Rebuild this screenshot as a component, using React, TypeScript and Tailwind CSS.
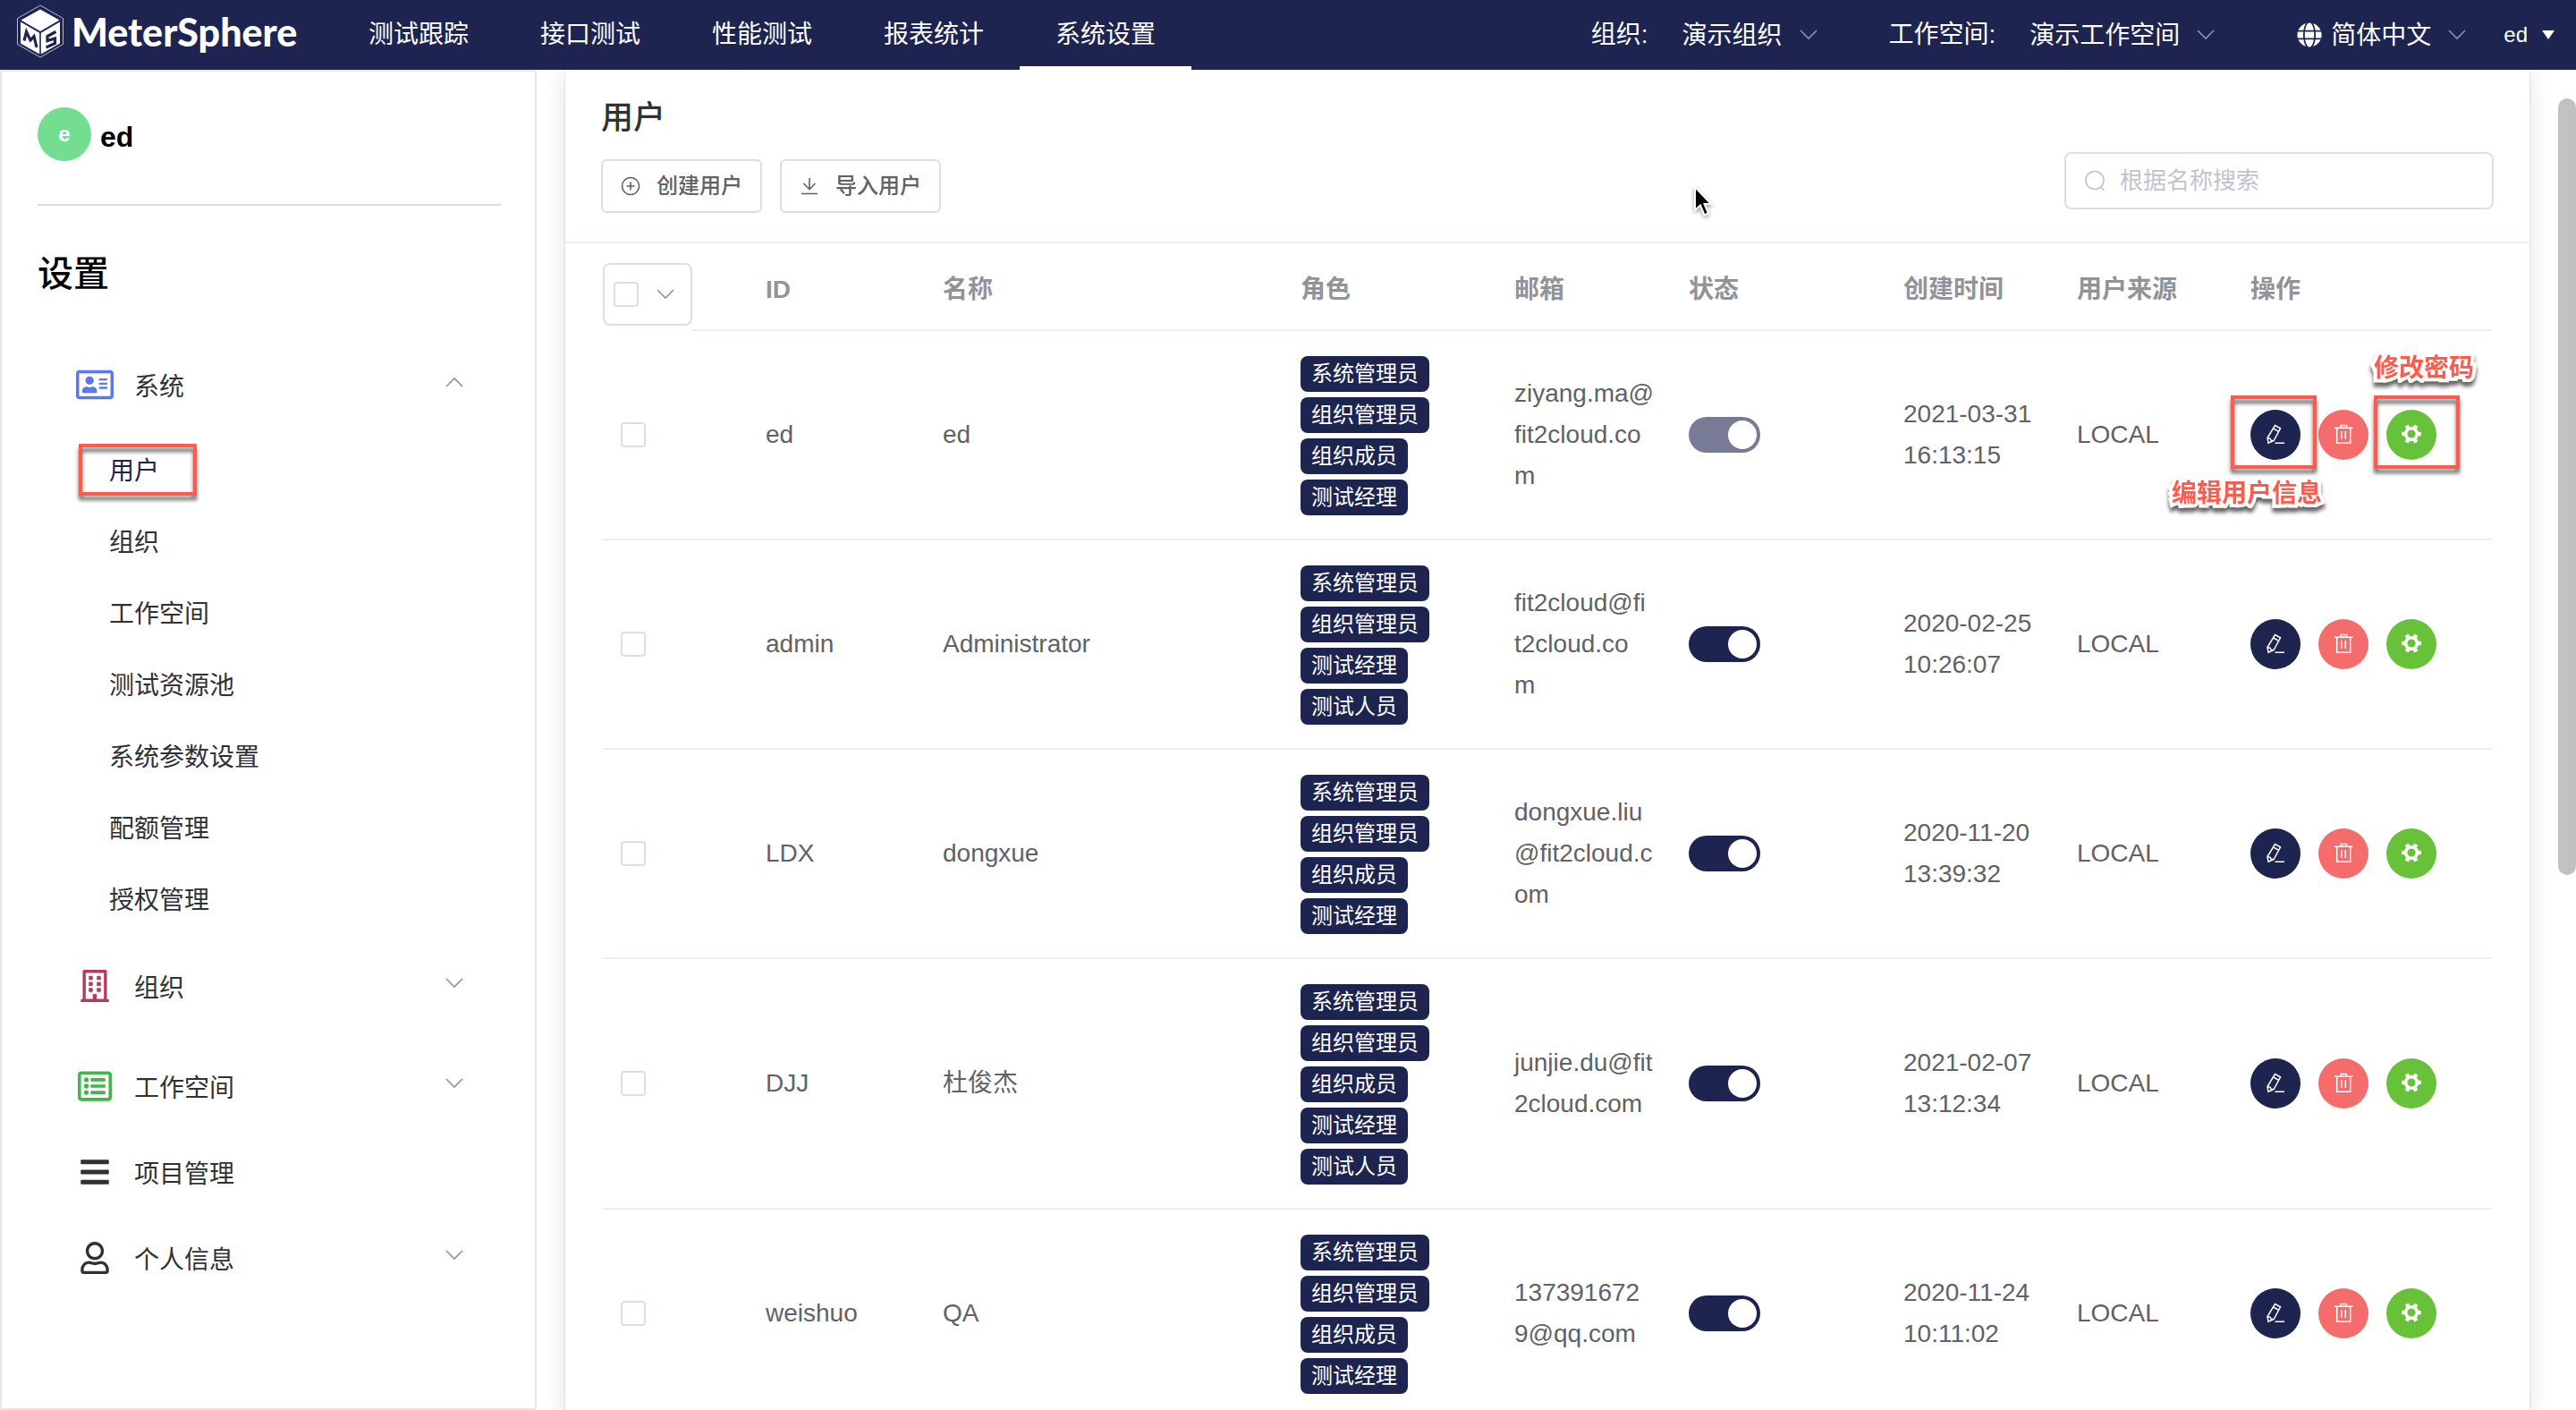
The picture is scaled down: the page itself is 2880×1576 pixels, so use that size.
import React from "react";
import {
  FaBars,
  FaGlobe,
  FaRegAddressCard,
  FaRegBuilding,
  FaRegListAlt,
  FaRegUser,
} from "react-icons/fa";

const NAV = ["测试跟踪", "接口测试", "性能测试", "报表统计", "系统设置"];

const SYSTEM_ITEMS = [
  "用户",
  "组织",
  "工作空间",
  "测试资源池",
  "系统参数设置",
  "配额管理",
  "授权管理",
];

type User = {
  id: string;
  name: string;
  roles: string[];
  email: string[];
  created: string[];
  locked?: boolean;
};

const USERS: User[] = [
  {
    id: "ed",
    name: "ed",
    roles: ["系统管理员", "组织管理员", "组织成员", "测试经理"],
    email: ["ziyang.ma@", "fit2cloud.co", "m"],
    created: ["2021-03-31", "16:13:15"],
    locked: true,
  },
  {
    id: "admin",
    name: "Administrator",
    roles: ["系统管理员", "组织管理员", "测试经理", "测试人员"],
    email: ["fit2cloud@fi", "t2cloud.co", "m"],
    created: ["2020-02-25", "10:26:07"],
  },
  {
    id: "LDX",
    name: "dongxue",
    roles: ["系统管理员", "组织管理员", "组织成员", "测试经理"],
    email: ["dongxue.liu", "@fit2cloud.c", "om"],
    created: ["2020-11-20", "13:39:32"],
  },
  {
    id: "DJJ",
    name: "杜俊杰",
    roles: ["系统管理员", "组织管理员", "组织成员", "测试经理", "测试人员"],
    email: ["junjie.du@fit", "2cloud.com"],
    created: ["2021-02-07", "13:12:34"],
  },
  {
    id: "weishuo",
    name: "QA",
    roles: ["系统管理员", "组织管理员", "组织成员", "测试经理"],
    email: ["137391672", "9@qq.com"],
    created: ["2020-11-24", "10:11:02"],
  },
];

function Chevron({ up = false, className = "" }: { up?: boolean; className?: string }) {
  return (
    <svg
      viewBox="0 0 20 12"
      fill="none"
      stroke="currentColor"
      strokeWidth="1.6"
      className={`h-3 w-5 shrink-0 ${className}`}
      aria-hidden="true"
    >
      <path d={up ? "M1 11 10 2l9 9" : "M1 1l9 9 9-9"} />
    </svg>
  );
}

function Logo() {
  return (
    <a href="#home" className="flex items-center gap-2 text-white">
      <svg viewBox="0 0 54 62" className="h-[62px] w-[54px]" aria-hidden="true">
        <path d="M27 2 52.500 16.500v29L27 60 1.500 45.500v-29z" fill="none" stroke="#b9bccb" strokeWidth="1" />
        <path d="M27 6.500 48.500 18.500 27 31 5.500 18.500z" fill="#fff" />
        <path d="M5 20.500 26.200 32.800V56.500L5 44.500z" fill="#fff" />
        <path d="M49 20.500 27.800 32.800V56.500L49 44.500z" fill="#fff" />
        <path d="M9 41.500 11.500 31.500l4.500 9.500 4-4.500 3 12.500" fill="none" stroke="#1d244f" strokeWidth="3.200" />
        <path d="M44.500 31.500 35 36.500v5l8.500-2.500v5.500L33.500 49" fill="none" stroke="#1d244f" strokeWidth="3.200" />
      </svg>
      <span className="font-['Lato'] text-[43px] leading-none font-black">MeterSphere</span>
    </a>
  );
}

function HeaderSelect({ id, label, value }: { id: string; label: string; value: string }) {
  return (
    <div className="flex items-center">
      <label htmlFor={id} className="mr-[38px]">
        {label}:
      </label>
      <select id={id} className="appearance-none bg-transparent pt-0.5 text-[28px] outline-none">
        <option>{value}</option>
      </select>
      <Chevron className="ml-[18px] text-[#8f93a8]" />
    </div>
  );
}

function TopBar() {
  return (
    <header className="flex h-[78px] shrink-0 items-center bg-[#1d244f] pr-6 pl-[18px] text-[28px] text-white">
      <div className="w-[354px] shrink-0 pb-2">
        <Logo />
      </div>
      <nav className="flex h-full">
        {NAV.map((item, i) => (
          <a
            key={item}
            href="#nav"
            className={`flex w-48 items-center justify-center border-y-4 border-t-transparent ${
              i === NAV.length - 1 ? "border-b-white" : "border-b-transparent"
            }`}
          >
            {item}
          </a>
        ))}
      </nav>
      <div className="ml-auto flex items-center">
        <HeaderSelect id="org" label="组织" value="演示组织" />
        <div className="ml-20">
          <HeaderSelect id="workspace" label="工作空间" value="演示工作空间" />
        </div>
        <label htmlFor="lang" className="mr-2.5 ml-[92px]">
          <FaGlobe className="h-7 w-7" aria-label="语言" />
        </label>
        <select id="lang" className="appearance-none bg-transparent pt-0.5 text-[28px] outline-none">
          <option>简体中文</option>
        </select>
        <Chevron className="ml-[18px] text-[#8f93a8]" />
        <button type="button" className="ml-[42px] flex items-center gap-4 text-2xl">
          ed
          <svg viewBox="0 0 14 10" className="h-2.5 w-3.5" aria-hidden="true">
            <path d="M0 0h14L7 10z" fill="currentColor" />
          </svg>
        </button>
      </div>
    </header>
  );
}

function MenuTitle({
  icon,
  text,
  arrow,
  short = false,
}: {
  icon: React.ReactNode;
  text: string;
  arrow?: "up" | "down";
  short?: boolean;
}) {
  return (
    <button type="button" className={`flex w-full items-center pl-20 pr-20 ${short ? "h-20" : "h-28"}`}>
      <span className="flex w-12 justify-center">{icon}</span>
      <span className="ml-5 pt-1.5">{text}</span>
      {arrow && <Chevron up={arrow === "up"} className="mb-1.5 ml-auto text-[#909399]" />}
    </button>
  );
}

function Sidebar() {
  return (
    <aside className="flex w-[600px] shrink-0 flex-col rounded-sm border-2 border-[#e6e6e6] bg-white text-[28px] text-[#303133]">
      <div className="mr-[38px] ml-10 flex items-center gap-2.5 border-b-2 border-[#d8dce5] pt-10 pb-12">
        <span className="flex h-[60px] w-[60px] items-center justify-center rounded-full bg-[#73dd92] text-2xl font-bold text-white">
          e
        </span>
        <span className="pt-1.5 text-[32px] leading-10 font-bold text-black">ed</span>
      </div>
      <h2 className="mx-10 mt-[52px] text-[40px] leading-[48px] font-medium text-black">设置</h2>
      <nav className="mt-11">
        <MenuTitle icon={<FaRegAddressCard className="h-[38px] w-[42px] text-[#5b78f0]" />} text="系统" arrow="up" />
        <ul>
          {SYSTEM_ITEMS.map((item, i) => (
            <li key={item} className="relative flex h-20 items-center pt-0.5 pl-[120px]">
              <a href="#menu" className={i === 0 ? "text-[#1d244f]" : ""}>
                {item}
              </a>
              {i === 0 && (
                <span className="absolute top-2.5 left-[86px] h-[58px] w-[132px] border-4 border-[#ff5a4c] drop-shadow-[0_5px_2px_rgba(0,0,0,0.6)]" />
              )}
            </li>
          ))}
        </ul>
        <MenuTitle icon={<FaRegBuilding className="h-9 w-9 text-[#b83a5b]" />} text="组织" arrow="down" />
        <MenuTitle icon={<FaRegListAlt className="h-[38px] w-[38px] text-[#44b549]" />} text="工作空间" arrow="down" />
        <MenuTitle icon={<FaBars className="h-9 w-9" />} text="项目管理" short />
        <MenuTitle icon={<FaRegUser className="h-9 w-9" />} text="个人信息" arrow="down" />
      </nav>
    </aside>
  );
}

function Toolbar() {
  return (
    <div className="border-b-2 border-[#ebeef5] px-10 pt-[30px] pb-8">
      <h1 className="text-[36px] leading-[48px] font-medium text-[#303133]">用户</h1>
      <div className="mt-3.5 flex h-[68px] justify-between">
        <div className="flex items-end gap-5 text-2xl font-medium text-[#606266]">
          <button type="button" className="flex h-[60px] items-center gap-[18px] rounded-md border-2 border-[#dcdfe6] px-5">
            <svg viewBox="0 0 22 22" fill="none" stroke="currentColor" strokeWidth="1.6" className="h-[22px] w-[22px]" aria-hidden="true">
              <circle cx="11" cy="11" r="9.500" />
              <path d="M11 6.500v9M6.500 11h9" />
            </svg>
            创建用户
          </button>
          <button type="button" className="flex h-[60px] items-center gap-[18px] rounded-md border-2 border-[#dcdfe6] px-5">
            <svg viewBox="0 0 22 22" fill="none" stroke="currentColor" strokeWidth="1.6" className="h-[22px] w-[22px]" aria-hidden="true">
              <path d="M11 2v12.500M4.500 8l6.500 6.500L17.500 8M2 19.500h18" />
            </svg>
            导入用户
          </button>
        </div>
        <label className="flex h-16 w-[480px] items-center gap-4 rounded-lg border-2 border-[#dcdfe6] px-5 text-[#c0c4cc]">
          <svg viewBox="0 0 24 24" fill="none" stroke="currentColor" strokeWidth="1.6" className="h-6 w-6 shrink-0" aria-hidden="true">
            <circle cx="12" cy="11.500" r="10" />
            <path d="M18.500 19l4 4" />
          </svg>
          <input
            type="text"
            aria-label="根据名称搜索"
            placeholder="根据名称搜索"
            className="w-full bg-transparent text-[26px] outline-none placeholder:text-[#c0c4cc]"
          />
        </label>
      </div>
    </div>
  );
}

function CheckBox({ label }: { label: string }) {
  return (
    <input
      type="checkbox"
      aria-label={label}
      className="block h-7 w-7 shrink-0 appearance-none rounded-sm border-2 border-[#dcdfe6] bg-white"
    />
  );
}

function EditIcon() {
  return (
    <svg viewBox="0 0 24 24" fill="none" stroke="#fff" strokeWidth="1.500" className="h-6 w-6" aria-hidden="true">
      <path d="M11.500 1.500 17.500 4.800 10.200 18.500 4 21.200 3 15.500zM9.700 5l6 3.400M3 15.500l3.200.8 1 2.300 3 0M11.500 21.300H22" />
    </svg>
  );
}

function TrashIcon() {
  return (
    <svg viewBox="0 0 24 24" fill="none" stroke="#fff" strokeWidth="1.500" className="h-6 w-6" aria-hidden="true">
      <path d="M2 4.300h20.500M9 4V1.500h6.500V4M4.700 4.300v16.900h15V4.300M9.800 8v9M14.300 8v9" />
    </svg>
  );
}

function GearIcon() {
  return (
    <svg viewBox="0 0 24 24" className="h-6 w-6" fill="none" stroke="#fff" aria-hidden="true">
      <circle cx="12" cy="11" r="6.400" strokeWidth="3.600" />
      {[0, 60, 120, 180, 240, 300].map((a) => (
        <path key={a} d="M19 11h3.800" strokeWidth="4.400" transform={`rotate(${a} 12 11)`} />
      ))}
    </svg>
  );
}

const NOTE =
  "absolute text-[28px] leading-10 font-bold whitespace-nowrap text-[#ff5a4c] [-webkit-text-stroke:8px_#fff] [paint-order:stroke_fill] drop-shadow-[0_5px_2px_rgba(0,0,0,0.6)]";
const FRAME = "absolute -top-4 h-[82px] w-24 border-4 border-[#ff5a4c] drop-shadow-[0_5px_2px_rgba(0,0,0,0.6)]";
const ROUND = "flex h-14 w-14 items-center justify-center rounded-full";

function Actions({ annotated }: { annotated: boolean }) {
  return (
    <div className="relative flex gap-5">
      <button type="button" aria-label="编辑" className={`${ROUND} bg-[#1d244f]`}>
        <EditIcon />
      </button>
      <button type="button" aria-label="删除" className={`${ROUND} bg-[#f56c6c]`}>
        <TrashIcon />
      </button>
      <button type="button" aria-label="修改密码" className={`${ROUND} bg-[#67c23a]`}>
        <GearIcon />
      </button>
      {annotated && (
        <>
          <span className={`${FRAME} -left-[22px]`} />
          <span className={`${FRAME} left-[138px]`} />
          <span className={`${NOTE} -top-[66px] left-[138px]`}>修改密码</span>
          <span className={`${NOTE} top-[74px] -left-[88px]`}>编辑用户信息</span>
        </>
      )}
    </div>
  );
}

const TH = "border-b-2 border-[#ebeef5] px-5 pt-2 text-left font-bold";
const TD = "border-b-2 border-[#ebeef5] px-5 py-6";

function UserTable() {
  return (
    <div className="px-[42px]">
      <table className="w-full table-fixed border-separate border-spacing-0 text-[28px] leading-[46px] text-[#606266]">
        <colgroup>
          <col className="w-[100px]" />
          <col className="w-[62px]" />
          <col className="w-[198px]" />
          <col />
          <col className="w-[239px]" />
          <col className="w-[195px]" />
          <col className="w-[240px]" />
          <col className="w-[194px]" />
          <col className="w-[194px]" />
          <col className="w-[290px]" />
        </colgroup>
        <thead className="text-[#909399]">
          <tr>
            <th className="pt-[22px] pb-1.5">
              <div className="flex h-[70px] items-center gap-5 rounded-lg border-2 border-[#dcdfe6] pl-2.5">
                <CheckBox label="全选" />
                <button type="button" aria-label="选择范围">
                  <Chevron />
                </button>
              </div>
            </th>
            <th className={TH} />
            <th className={TH}>ID</th>
            <th className={TH}>名称</th>
            <th className={TH}>角色</th>
            <th className={TH}>邮箱</th>
            <th className={TH}>状态</th>
            <th className={TH}>创建时间</th>
            <th className={TH}>用户来源</th>
            <th className={TH}>操作</th>
          </tr>
        </thead>
        <tbody>
          {USERS.map((u, i) => (
            <tr key={u.id}>
              <td className={TD}>
                <CheckBox label={`选择 ${u.id}`} />
              </td>
              <td className={TD} />
              <td className={TD}>{u.id}</td>
              <td className={TD}>{u.name}</td>
              <td className={TD}>
                {u.roles.map((r) => (
                  <div key={r} className="flex h-[46px] items-center pt-0.5">
                    <span className="rounded-lg bg-[#1d244f] px-3 text-2xl leading-10 whitespace-nowrap text-white">
                      {r}
                    </span>
                  </div>
                ))}
              </td>
              <td className={`${TD} whitespace-nowrap`}>
                {u.email.map((line) => (
                  <div key={line}>{line}</div>
                ))}
              </td>
              <td className={TD}>
                <input
                  type="checkbox"
                  role="switch"
                  aria-label={`${u.id} 状态`}
                  defaultChecked
                  disabled={u.locked}
                  className="flex h-10 w-20 appearance-none items-center rounded-full bg-[#c0ccda] px-1 before:h-8 before:w-8 before:rounded-full before:bg-white checked:justify-end checked:bg-[#1d244f] disabled:opacity-60"
                />
              </td>
              <td className={`${TD} whitespace-nowrap`}>
                {u.created.map((line) => (
                  <div key={line}>{line}</div>
                ))}
              </td>
              <td className={TD}>LOCAL</td>
              <td className={TD}>
                <Actions annotated={i === 0} />
              </td>
            </tr>
          ))}
        </tbody>
      </table>
    </div>
  );
}

export default function App() {
  return (
    <div className="relative flex h-screen flex-col overflow-hidden bg-white font-['Liberation_Sans','Noto_Sans_CJK_SC',sans-serif]">
      <TopBar />
      <div className="flex min-h-0 flex-1">
        <Sidebar />
        <main className="flex min-w-0 flex-1 overflow-hidden pl-8">
          <section className="min-w-0 flex-1 self-start bg-white shadow-[0_4px_24px_rgba(0,0,0,0.12),0_0_0_1px_#ebeef5]">
            <Toolbar />
            <UserTable />
          </section>
          <div className="ml-8 w-5 shrink-0 pt-8">
            <div className="h-[868px] rounded-full bg-[#c1c1c1]" />
          </div>
        </main>
      </div>
      <svg
        viewBox="0 0 24 38"
        className="absolute top-[206px] left-[1892px] h-[38px] w-6 drop-shadow-[0_2px_2px_rgba(0,0,0,0.4)]"
        aria-hidden="true"
      >
        <path d="M3 3v26l6-5.500 4.500 11 4.500-2-4.500-10.500H21z" fill="#000" stroke="#fff" strokeWidth="2" />
      </svg>
    </div>
  );
}
